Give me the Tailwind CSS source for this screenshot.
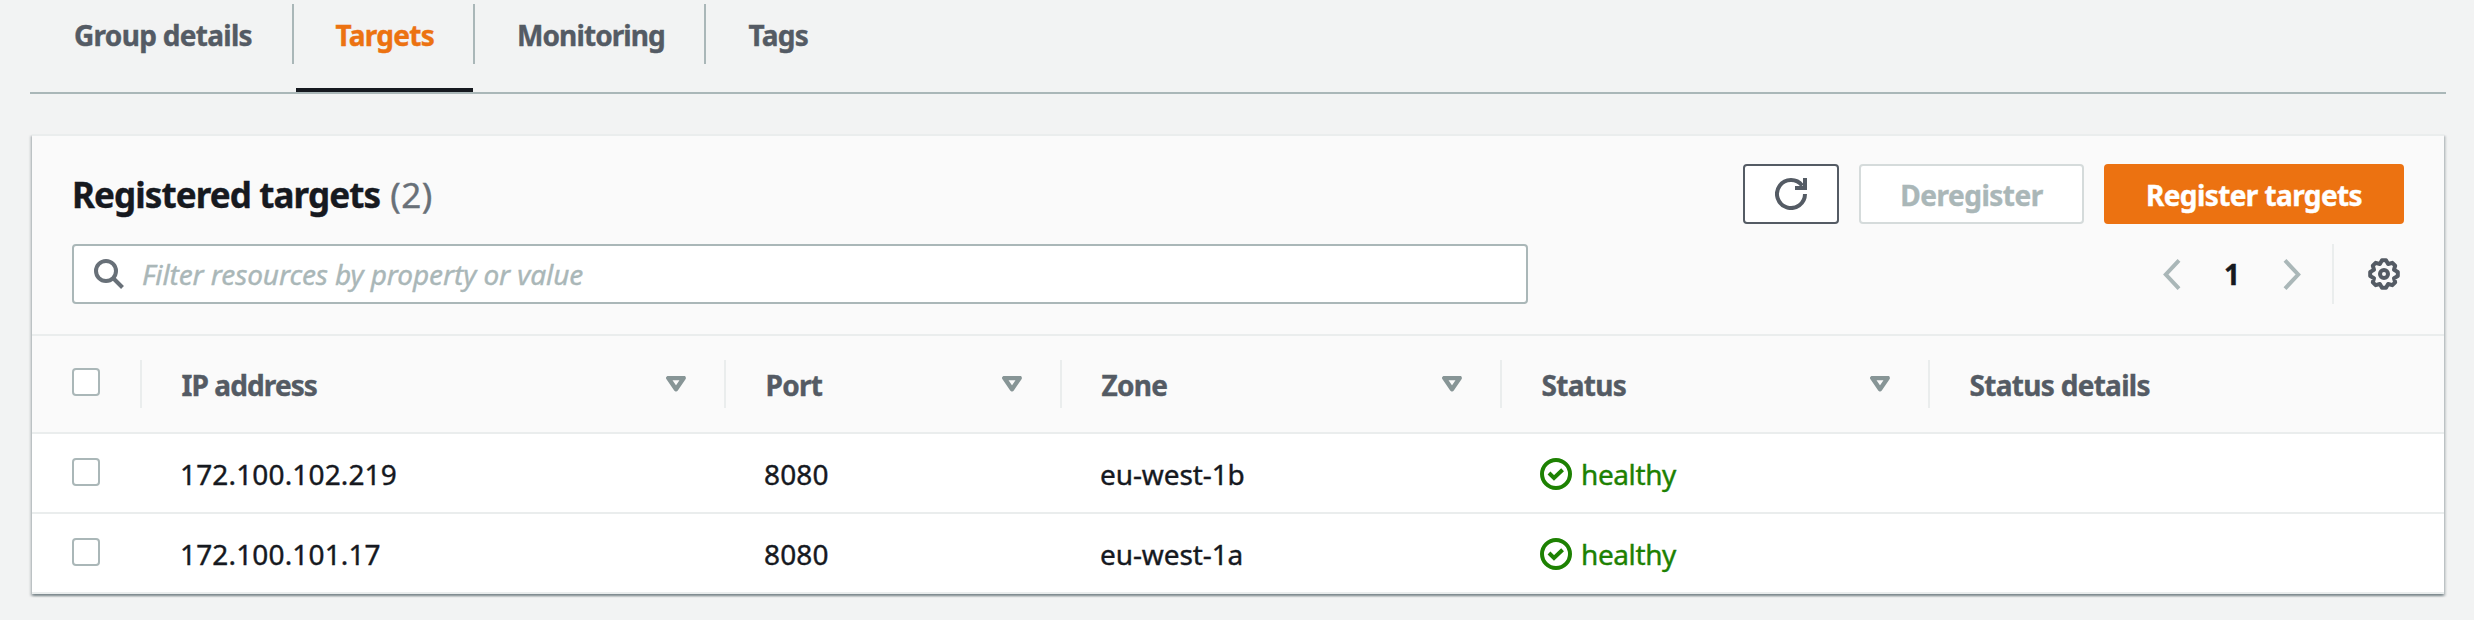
<!DOCTYPE html>
<html lang="en">
<head>
<meta charset="utf-8">
<title>Target group</title>
<script src="https://cdn.jsdelivr.net/npm/@tailwindcss/browser@4"></script>
</head>
<body class="h-[620px] overflow-hidden bg-[#f2f3f3] font-['Noto_Sans','Open_Sans',sans-serif] text-[28px] leading-[44px] text-[#16191f] [-webkit-text-stroke:0.4px]">

<svg class="hidden">
  <symbol id="sort" viewBox="0 0 20 16"><path d="M2.300 2h15.400L10 13.200z" fill="none" stroke="currentColor" stroke-width="4.400" stroke-linejoin="round"/></symbol>
  <symbol id="ok" viewBox="0 0 32 32"><circle cx="16" cy="16" r="14" fill="none" stroke="currentColor" stroke-width="4"/><path d="M9 15l5 5 8.600-8.200" fill="none" stroke="currentColor" stroke-width="4"/></symbol>
</svg>

<nav class="ml-[30px] flex h-[94px] w-[2416px] items-start gap-[2px] border-b-2 border-[#aab7b8] pt-1 font-bold tracking-[-0.7px] text-[#545b64]">
  <div class="w-[264px]"><div class="flex h-[60px] items-center border-r-2 border-[#aab7b8] pt-px pl-[44px]"><span>Group details</span></div></div>
  <div class="w-[179px]"><div class="flex h-[60px] items-center border-r-2 border-[#aab7b8] pt-px pl-[39.5px] text-[#ec7211]"><span>Targets</span></div><div class="mt-6 mr-[2px] h-1 bg-[#16191f]"></div></div>
  <div class="w-[229px]"><div class="flex h-[60px] items-center border-r-2 border-[#aab7b8] pt-px pl-[40px] tracking-[-0.9px]"><span>Monitoring</span></div></div>
  <div><div class="flex h-[60px] items-center pt-px pl-[40.5px]"><span>Tags</span></div></div>
</nav>

<main class="mx-[32px] mt-[40px] w-[2412px] border-t-2 border-[#eaeded] bg-white shadow-[0_2px_2px_rgba(0,28,36,0.3),2px_2px_2px_rgba(0,28,36,0.15),-2px_2px_2px_rgba(0,28,36,0.15)]">
  <header class="flex h-[200px] flex-col gap-5 border-b-2 border-[#eaeded] bg-[#fafafa] px-[40px] pt-7">
    <div class="flex h-[60px] items-center justify-between">
      <h2 class="flex gap-[10px] pt-[2px] text-[35px] font-bold tracking-[-0.9px]"><span>Registered targets</span><span class="font-normal tracking-[0.5px] text-[#687078]">(2)</span></h2>
      <div class="flex gap-5 font-bold tracking-[-0.6px]">
        <button class="flex h-[60px] w-[96px] items-center justify-center rounded-[4px] border-2 border-[#545b64] bg-white text-[#545b64]">
          <svg class="size-8" viewBox="0 0 16 16" fill="none" stroke="currentColor" stroke-width="2"><path d="M15 8a7 7 0 1 1-1.400-4.200M10 5h5V0"/></svg>
        </button>
        <button class="flex h-[60px] w-[225px] items-center justify-center rounded-[4px] border-2 border-[#d5dbdb] bg-white pt-px tracking-[-0.5px] text-[#aab7b8]"><span>Deregister</span></button>
        <button class="flex h-[60px] w-[300px] items-center justify-center rounded-[4px] bg-[#ec7211] pt-px text-white"><span>Register targets</span></button>
      </div>
    </div>
    <div class="flex h-[60px] items-center justify-between">
      <div class="flex h-[60px] w-[1456px] items-center rounded-[4px] border-2 border-[#aab7b8] bg-white pl-5">
        <svg class="size-[30px] text-[#687078]" viewBox="0 0 30 30" fill="none" stroke="currentColor" stroke-width="4"><circle cx="12" cy="12" r="10"/><path d="M19 19l9.500 9.500"/></svg>
        <span class="ml-[18px] tracking-[-0.1px] text-[#aab7b8] italic">Filter resources by property or value</span>
      </div>
      <div class="flex h-[60px] items-center pr-1 text-[#aab7b8]">
        <svg class="h-[31px] w-[18px]" viewBox="0 0 18 31" fill="none" stroke="currentColor" stroke-width="4"><path d="M16 1.400L2.800 15.500 16 29.600"/></svg>
        <span class="w-[102px] text-center font-bold text-[#16191f]">1</span>
        <svg class="h-[31px] w-[18px]" viewBox="0 0 18 31" fill="none" stroke="currentColor" stroke-width="4"><path d="M2 1.400L15.200 15.500 2 29.600"/></svg>
        <div class="mr-[34px] ml-[31px] h-[60px] w-[2px] bg-[#eaeded]"></div>
        <svg class="size-8 text-[#545b64]" viewBox="0 0 16 16" fill="none" stroke="currentColor" stroke-width="2" stroke-linejoin="round"><path d="M7 1.100L9 1.100 10.070 3.010 12.170 2.410 13.590 3.830 12.990 5.930 14.900 7 14.900 9 12.990 10.070 13.590 12.170 12.170 13.590 10.070 12.990 9 14.900 7 14.900 5.930 12.990 3.830 13.590 2.410 12.170 3.010 10.070 1.100 9 1.100 7 3.010 5.930 2.410 3.830 3.830 2.410 5.930 3.010z"/><circle cx="8" cy="8" r="2"/></svg>
      </div>
    </div>
  </header>

  <div class="flex h-[98px] items-center border-b-2 border-[#eaeded] bg-[#fafafa] font-bold tracking-[-0.7px] text-[#545b64]">
    <div class="flex h-12 w-[110px] items-center border-r-2 border-[#eaeded] pl-10"><div class="mb-1 size-7 rounded-[4px] border-2 border-[#aab7b8] bg-white"></div></div>
    <div class="flex h-12 w-[584px] items-center justify-between border-r-2 border-[#eaeded] pr-[38px] pl-[39.5px] tracking-[-0.9px]"><span class="pt-px">IP address</span><svg class="h-4 w-5 text-[#879596]"><use href="#sort"/></svg></div>
    <div class="flex h-12 w-[336px] items-center justify-between border-r-2 border-[#eaeded] pr-[38px] pl-[39.5px]"><span class="pt-px">Port</span><svg class="h-4 w-5 text-[#879596]"><use href="#sort"/></svg></div>
    <div class="flex h-12 w-[440px] items-center justify-between border-r-2 border-[#eaeded] pr-[38px] pl-[39.5px]"><span class="pt-px">Zone</span><svg class="h-4 w-5 text-[#879596]"><use href="#sort"/></svg></div>
    <div class="flex h-12 w-[428px] items-center justify-between border-r-2 border-[#eaeded] pr-[38px] pl-[39.5px]"><span class="pt-px">Status</span><svg class="h-4 w-5 text-[#879596]"><use href="#sort"/></svg></div>
    <div class="flex h-12 items-center pl-[39.5px]"><span class="pt-px">Status details</span></div>
  </div>

  <div class="flex h-20 items-center border-b-2 border-[#eaeded] pt-[2px]">
    <div class="w-[110px] pl-10"><div class="mb-1 size-7 rounded-[4px] border-2 border-[#aab7b8] bg-white"></div></div>
    <div class="w-[584px] pl-[38px] tracking-[0.15px]"><span>172.100.102.219</span></div>
    <div class="w-[336px] pl-[38px] tracking-[0.15px]"><span>8080</span></div>
    <div class="w-[440px] pl-[38px] tracking-[-0.1px]"><span>eu-west-1b</span></div>
    <div class="flex items-center gap-[9px] pl-[38px] tracking-[-0.4px] text-[#1d8102]"><svg class="size-8"><use href="#ok"/></svg><span>healthy</span></div>
  </div>
  <div class="flex h-20 items-center border-b-2 border-[#eaeded] pt-[2px]">
    <div class="w-[110px] pl-10"><div class="mb-1 size-7 rounded-[4px] border-2 border-[#aab7b8] bg-white"></div></div>
    <div class="w-[584px] pl-[38px] tracking-[0.15px]"><span>172.100.101.17</span></div>
    <div class="w-[336px] pl-[38px] tracking-[0.15px]"><span>8080</span></div>
    <div class="w-[440px] pl-[38px] tracking-[-0.1px]"><span>eu-west-1a</span></div>
    <div class="flex items-center gap-[9px] pl-[38px] tracking-[-0.4px] text-[#1d8102]"><svg class="size-8"><use href="#ok"/></svg><span>healthy</span></div>
  </div>
</main>
</body>
</html>
